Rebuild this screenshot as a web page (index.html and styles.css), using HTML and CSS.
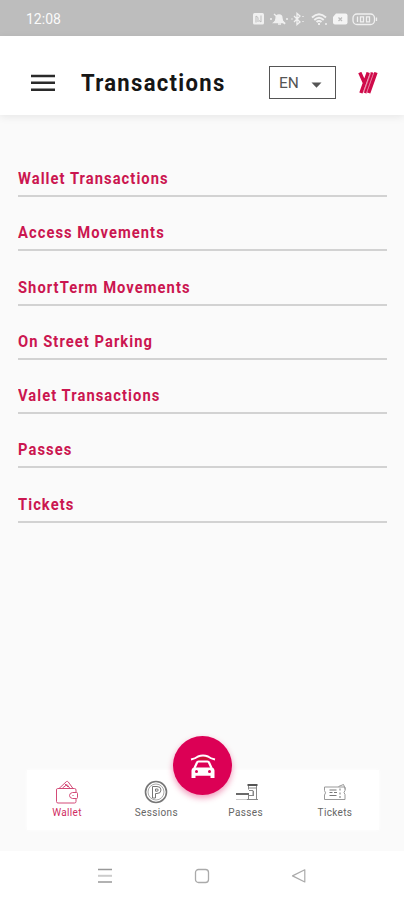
FILE: index.html
```html
<!DOCTYPE html>
<html lang="en">
<head>
<meta charset="utf-8">
<title>Transactions</title>
<link rel="stylesheet" href="styles.css">
</head>
<body>
<div class="status">
  <span class="clock">12:08</span>
  <svg class="status-icons" width="128" height="16" viewBox="0 0 128 16" fill="none" stroke="#f0f0f0" stroke-width="1.3">
    <rect x="1" y="2" width="11" height="11.500" rx="1.500" fill="#f0f0f0" stroke="none"/>
    <path d="M4 11.500V5l2 1.500V11M9 4.500V11L7 9.500" stroke="#bdbdbd" stroke-width="1"/>
    <path d="M22 11.500Q24 10 24 7.500Q24 4 27 4Q30 4 30 7.500Q30 10 32 11.500Z" fill="#f0f0f0"/>
    <path d="M26 13h3M22 3l11 10M18 8h2M34 8h2"/>
    <path d="M42 5l6 6-3 2.500V2.500L48 5l-6 6M51 5v1M51 10v1M39.500 8h1"/>
    <path d="M60 6.500Q67 0 74 6.500M62.300 9Q67 4.500 71.700 9M64.500 11Q67 8.800 69.500 11M67 12v2" stroke-width="1.900"/>
    <path d="M73 13h2"/>
    <path d="M84 2.500h9.500q2 0 2 2v7q0 2-2 2h-10.500q-2 0-2-2V6Z" fill="#f4f4f4" stroke="none"/>
    <path d="M86.500 6.500l3.500 3.500M90 6.500l-3.500 3.500" stroke="#bdbdbd"/>
    <rect x="101" y="3" width="21.500" height="10.500" rx="4"/>
    <path d="M124.500 6.500v3.500M105.500 5.500v5.500M108.500 5.800h3v5h-3ZM114.500 5.800h3v5h-3Z" stroke-width="1.300"/>
  </svg>
</div>
<header class="header">
  <svg class="menu" width="24" height="18" viewBox="0 0 24 18"><path d="M0 2h24M0 8.800h24M0 15.800h24" stroke="#2a2a2a" stroke-width="2.500"/></svg>
  <h1 class="title"><span>Transactions</span></h1>
  <div class="lang"><span>EN</span><svg width="11" height="6" viewBox="0 0 11 6"><path d="M0.500 0.500h10L5.500 5.800z" fill="#555"/></svg></div>
  <svg class="logo" width="20" height="22" viewBox="0 0 20 22" fill="none" stroke="#cf0a4a" stroke-width="3.400">
    <path d="M14.300 0.500L7 21" stroke="#e98aa8" stroke-width="4"/>
    <path d="M1.800 0.500L6.500 11M10.200 0.500L2.900 21M18 0.500L10.700 21"/>
    <path d="M14.300 0.500L7 21" stroke-width="2"/>
  </svg>
</header>
<main class="list">
  <a class="row"><span>Wallet Transactions</span></a>
  <a class="row"><span>Access Movements</span></a>
  <a class="row"><span>ShortTerm Movements</span></a>
  <a class="row"><span>On Street Parking</span></a>
  <a class="row"><span>Valet Transactions</span></a>
  <a class="row"><span>Passes</span></a>
  <a class="row"><span>Tickets</span></a>
</main>
<nav class="tabs">
  <a class="tab active">
    <svg width="24" height="24" viewBox="0 0 24 24" fill="none" stroke="#d34b78" stroke-width="1">
      <path d="M4 8.500H2.500Q1.500 8.500 1.500 10V21.500Q1.500 23 3 23H19.500Q21 23 21 21.500V18.500M21 12.500V10Q21 8.500 19.500 8.500H4L11.500 1.500Q12.500 1 13.300 2L18 8.500M7.500 8L12 4.500L15 8.500M10 4L13 7"/>
      <path d="M21.500 12.500H17.500Q14.500 13 14.500 15.500T17.500 18.500H21.500Q22.500 18.500 22.500 17.500V13.500Q22.500 12.500 21.500 12.500ZM17.500 15.500h1"/>
    </svg><span>Wallet</span></a>
  <a class="tab">
    <svg width="24" height="24" viewBox="0 0 24 24" fill="none" stroke="#777" stroke-width="1">
      <circle cx="12" cy="12" r="10.500" stroke-width="1.600"/><circle cx="12" cy="12" r="8" stroke="#aaa"/>
      <path d="M8.500 18V6.500H13Q17 6.500 17 10T13 13.500H11.500V18ZM11.500 9v2.200H13Q14.300 11 14.300 10T13 9Z"/>
    </svg><span>Sessions</span></a>
  <a class="tab">
    <svg width="24" height="24" viewBox="0 0 24 24" fill="none" stroke="#888" stroke-width="1">
      <path d="M13.500 5h10" stroke="#555" stroke-width="2"/>
      <path d="M14.500 6v3.500M22.500 6v13.500M14.500 15v4M14 8h8.500M15 10.500h4v5h-4M19.500 11v5M12.500 19.500h11.500"/>
      <path d="M2 19.500h10" stroke="#ccc"/>
      <path d="M2 14h13" stroke="#444" stroke-width="1.600"/>
    </svg><span>Passes</span></a>
  <a class="tab">
    <svg width="24" height="24" viewBox="0 0 24 24" fill="none" stroke="#999" stroke-width="1">
      <path d="M1.500 7H22V10.500Q20 12.500 22 14.500V19.500H1.500V15Q3.500 13 1.500 10.500ZM15.500 6.500L20.500 4.500L22.500 9.500"/>
      <path d="M6.500 10h7M6.500 12.500h3M11 12.500h3M6.500 15.500h7M17 8.500v2M17 12.500v2M17 16v2" stroke="#777"/>
    </svg><span>Tickets</span></a>
  <a class="fab">
    <svg width="26" height="26" viewBox="0 0 26 26" fill="none" stroke="#fff">
      <path d="M8 6.300Q13 4 18 6.300" stroke="#c21a2a" stroke-width="2"/>
      <path d="M1 6.500Q5.500 5.500 8 3.500Q13 1.500 18 3.500Q20.500 5.500 25 6.500" stroke-width="2"/>
      <path d="M4.500 15L7 9.500Q7.400 8.500 8.500 8.500H17.500Q18.600 8.500 19 9.500L21.500 15" stroke-width="2.200"/>
      <path d="M3.500 14.500H22.500Q24.500 15.500 24.500 17.500V25H20.500V22.800H5.500V25H1.500V17.500Q1.500 15.500 3.500 14.500Z" fill="#fff" stroke="none"/>
      <circle cx="6.500" cy="18.500" r="1.500" fill="#dc0055" stroke="none"/><circle cx="19.500" cy="18.500" r="1.500" fill="#dc0055" stroke="none"/>
    </svg></a>
</nav>
<footer class="system">
  <svg width="16" height="16" viewBox="0 0 16 16"><path d="M1 1.500h14M1 14h14" stroke="#999" stroke-width="1.300"/><path d="M1 7.800h14" stroke="#ccc" stroke-width="2"/></svg>
  <svg width="16" height="16" viewBox="0 0 16 16" fill="none" stroke="#aaa" stroke-width="1.300"><rect x="1.500" y="1.500" width="13" height="13" rx="3"/></svg>
  <svg width="16" height="16" viewBox="0 0 16 16" fill="none" stroke="#aaa" stroke-width="1.200"><path d="M13.800 1.800V14L1.500 7.900Z" stroke-linejoin="round"/></svg>
</footer>
</body>
</html>
```
FILE: styles.css
```css
* { box-sizing: border-box; }
body {
  margin: 0;
  width: 404px;
  height: 900px;
  overflow: hidden;
  display: flex;
  flex-direction: column;
  background: #fafafa;
  font-family: Roboto, "Liberation Sans", sans-serif;
}
svg { display: block; flex: none; }
.status {
  height: 36px;
  flex: none;
  background: #bdbdbd;
  display: flex;
  align-items: center;
  justify-content: space-between;
  padding: 1px 24px 0 26px;
}
.clock { color: #fafafa; font-size: 14px; line-height: 16px; }
.header {
  height: 79px;
  flex: none;
  background: #fff;
  display: flex;
  align-items: center;
  padding: 14px 26px 0 31px;
  box-shadow: 0 2px 8px rgba(0, 0, 0, 0.08);
}
.title {
  margin: 0 0 0 26px;
  width: 188px;
  font-size: 24.5px;
  line-height: 28px;
  font-weight: 700;
  letter-spacing: 1.45px;
  color: #161616;
  white-space: nowrap;
}
.title span {
  display: inline-block;
  transform: scaleX(0.9);
  transform-origin: left;
}
.lang {
  width: 67px;
  height: 33px;
  flex: none;
  border: 1px solid #555;
  display: flex;
  align-items: center;
  justify-content: space-between;
  padding: 0 13px 0 9px;
  font-size: 15.5px;
  color: #555;
}
.lang svg { margin-top: 5px; }
.logo { margin-left: 22px; }
.list { padding: 27.7px 17px 0 18px; flex: 1; }
.row {
  display: flex;
  align-items: flex-end;
  height: 54.3px;
  border-bottom: 2px solid #d2d2d2;
  padding-bottom: 7px;
  font-size: 16px;
  line-height: 19px;
  font-weight: 700;
  letter-spacing: 1.15px;
  color: #cb1650;
}
.row span {
  transform: scaleX(0.92);
  transform-origin: left;
}
.tabs {
  position: relative;
  height: 60px;
  flex: none;
  margin: 0 25px 21px 27px;
  background: #fff;
  box-shadow: 0 0 5px rgba(255, 255, 255, 0.9);
  display: flex;
  justify-content: space-between;
  padding: 10px 18px 0 14px;
}
.tab {
  width: 52px;
  display: flex;
  flex-direction: column;
  align-items: center;
  font-size: 10px;
  line-height: 13px;
  letter-spacing: 0.35px;
  color: #666;
}
.tab span { margin-top: 2px; }
.active { color: #cf2c62; }
.fab {
  position: absolute;
  left: 146px;
  top: -34px;
  width: 59px;
  height: 59px;
  border-radius: 50%;
  background: #dc0055;
  box-shadow: 0 3px 6px rgba(220, 0, 85, 0.4);
  display: flex;
  align-items: center;
  justify-content: center;
}
.system {
  height: 49px;
  flex: none;
  background: #fff;
  display: flex;
  justify-content: space-between;
  align-items: center;
  padding: 0 97px 0 97px;
}
```
